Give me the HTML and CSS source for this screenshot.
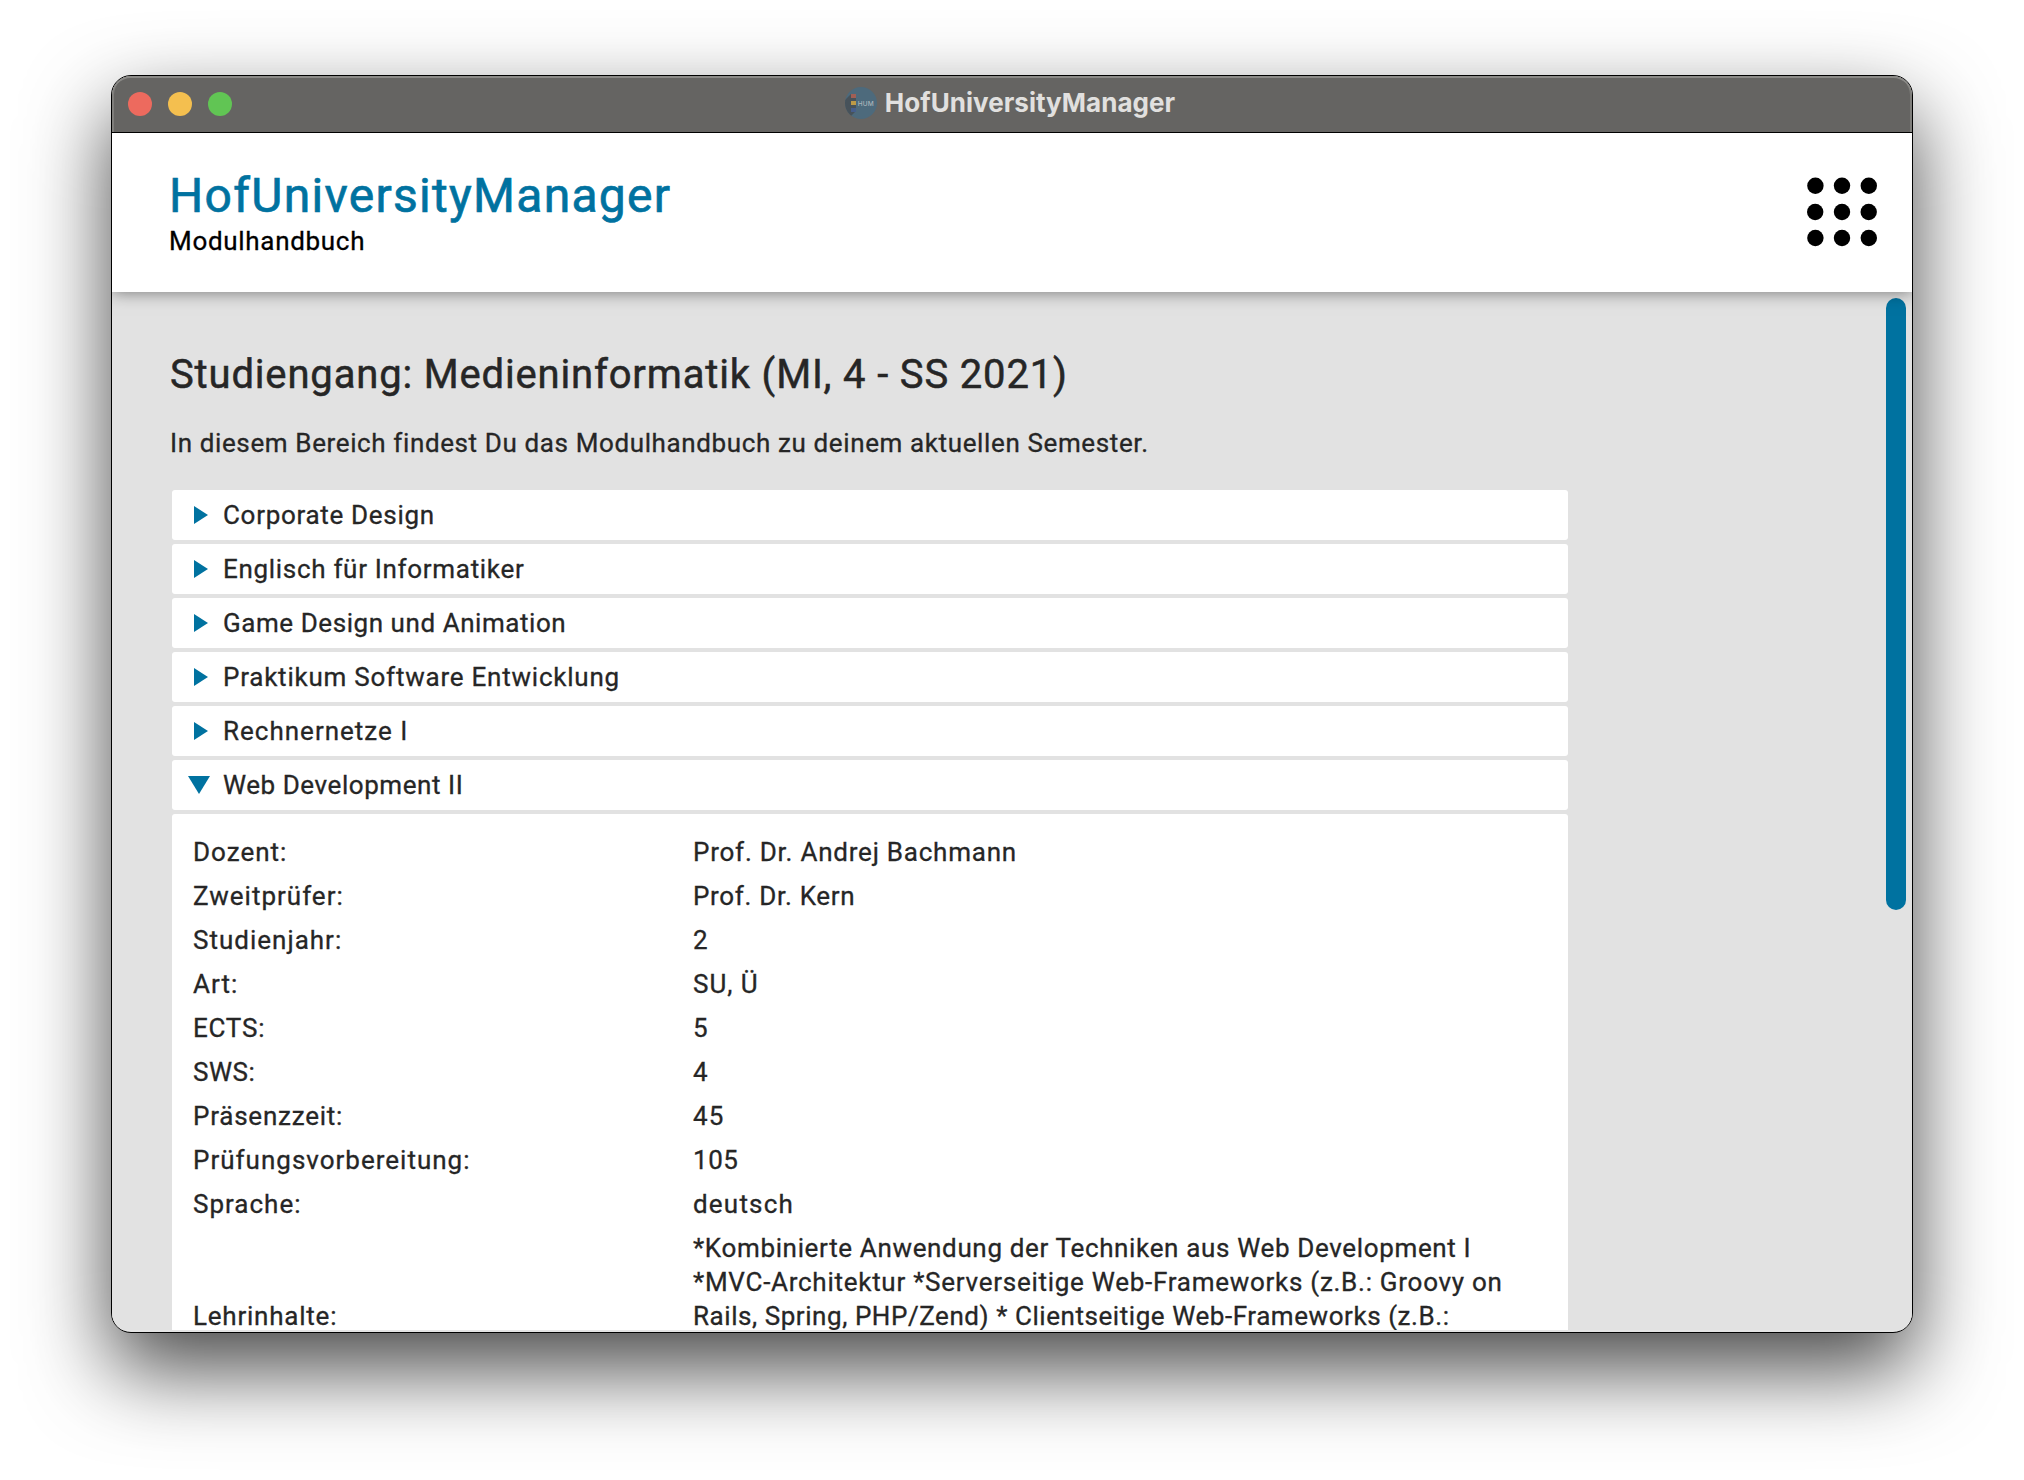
FILE: index.html
```html
<!DOCTYPE html>
<html lang="de">
<head>
<meta charset="utf-8">
<title>HofUniversityManager</title>
<link rel="stylesheet" href="styles.css">
</head>
<body>
<div class="window">
  <div class="titlebar">
    <div class="lights"><span class="light red"></span><span class="light yellow"></span><span class="light green"></span></div>
    <div class="caption">
      <svg class="app-icon" viewBox="0 0 32 32" width="32" height="32">
        <defs><clipPath id="disc"><circle cx="16" cy="16" r="16"/></clipPath></defs>
        <circle cx="16" cy="16" r="16" fill="#4d6a7c"/>
        <g clip-path="url(#disc)">
          <path d="M6 7L0 13V27L6 29L11 24V7Z" fill="#47525a"/>
          <rect x="6" y="7" width="5" height="4" fill="#a05f55"/>
          <rect x="6" y="14" width="5" height="4" fill="#bd9a47"/>
          <rect x="6" y="21" width="5" height="4" fill="#465e8c"/>
        </g>
        <text x="12.8" y="18.6" class="icon-text">HUM</text>
      </svg>
      <span class="caption-text">HofUniversityManager</span>
    </div>
  </div>
  <header class="header">
    <div class="brand">
      <h1>HofUniversityManager</h1>
      <p>Modulhandbuch</p>
    </div>
    <svg class="menu" viewBox="0 0 70 70" width="70" height="70">
      <circle cx="8.4" cy="8.7" r="8.2"/><circle cx="35" cy="8.7" r="8.2"/><circle cx="61.8" cy="8.7" r="8.2"/>
      <circle cx="8.2" cy="35" r="8.2"/><circle cx="35" cy="35" r="8.2"/><circle cx="61.7" cy="35" r="8.2"/>
      <circle cx="8.4" cy="61" r="8.2"/><circle cx="35" cy="61" r="8.2"/><circle cx="61.8" cy="61" r="8.2"/>
    </svg>
  </header>
  <main class="main">
    <div class="content">
      <h2>Studiengang: Medieninformatik (MI, 4 - SS 2021)</h2>
      <p class="intro">In diesem Bereich findest Du das Modulhandbuch zu deinem aktuellen Semester.</p>
      <div class="modules">
        <div class="module"><i class="arrow"></i><span>Corporate Design</span></div>
        <div class="module"><i class="arrow"></i><span>Englisch für Informatiker</span></div>
        <div class="module"><i class="arrow"></i><span class="tight">Game Design und Animation</span></div>
        <div class="module"><i class="arrow"></i><span class="wide">Praktikum Software Entwicklung</span></div>
        <div class="module"><i class="arrow"></i><span class="wider">Rechnernetze I</span></div>
        <div class="module"><i class="arrow open"></i><span class="tight">Web Development II</span></div>
        <dl class="details">
          <dt class="wider">Dozent:</dt><dd class="wide">Prof. Dr. Andrej Bachmann</dd>
          <dt class="wider">Zweitprüfer:</dt><dd>Prof. Dr. Kern</dd>
          <dt class="wider">Studienjahr:</dt><dd>2</dd>
          <dt class="wider">Art:</dt><dd class="wider">SU, Ü</dd>
          <dt class="wide">ECTS:</dt><dd>5</dd>
          <dt class="tight">SWS:</dt><dd>4</dd>
          <dt class="wide">Präsenzzeit:</dt><dd class="widest">45</dd>
          <dt class="wider">Prüfungsvorbereitung:</dt><dd class="tight">105</dd>
          <dt class="wider">Sprache:</dt><dd class="widest">deutsch</dd>
          <dt class="wide">Lehrinhalte:</dt><dd class="topics"><span class="line-1">*Kombinierte Anwendung der Techniken aus Web Development I</span><br>*MVC-Architektur *Serverseitige Web-Frameworks (z.B.: Groovy on<br><span class="tight">Rails, Spring, PHP/Zend) * Clientseitige Web-Frameworks (z.B.:</span></dd>
        </dl>
      </div>
    </div>
    <div class="scroll-thumb"></div>
  </main>
</div>
</body>
</html>
```
FILE: styles.css
```css
* { box-sizing: border-box; margin: 0; padding: 0; }
html, body { height: 100%; }
body {
  background: #fff;
  overflow: hidden;
  padding: 75px 111px 147px;
  font: 400 26px/34px Roboto, "Liberation Sans", sans-serif;
  letter-spacing: .69px;
  color: #262626;
}
.window {
  width: 1802px;
  height: 1258px;
  border: 1px solid #000;
  border-radius: 20px;
  background: #e5e5e5;
  overflow: hidden;
  display: flex;
  flex-direction: column;
  box-shadow: 0 36px 84px rgba(0, 0, 0, .72);
}
.titlebar {
  position: relative;
  z-index: 2;
  flex: none;
  height: 57px;
  background: #656462;
  border-bottom: 1px solid #000;
  border-radius: 19px 19px 0 0;
  box-shadow: inset 0 2px 0 #8b8a87, inset 2px 0 0 #7f7e7b, inset -2px 0 0 #7f7e7b;
  display: grid;
  grid-template-columns: 1fr auto 1fr;
  align-items: center;
}
.lights { display: flex; gap: 16px; padding-left: 16px; }
.light { width: 24px; height: 24px; border-radius: 50%; }
.red { background: #ed6a5e; }
.yellow { background: #f4bf4f; }
.green { background: #61c554; }
.caption {
  display: flex;
  align-items: center;
  gap: 8px;
  padding: 0 4px 3px 0;
  font: 700 26px/34px Inter, sans-serif;
  letter-spacing: .03px;
  color: #e1e0df;
}
.icon-text { font: 500 6.5px Inter, sans-serif; letter-spacing: .2px; fill: #a9b3b9; }
.header, .main { -webkit-text-stroke: .3px currentColor; }
.header {
  position: relative;
  flex: none;
  height: 159px;
  padding: 33px 35px 0 57px;
  background: #fff;
  box-shadow: 0 0 16px rgba(0, 0, 0, .5);
  display: flex;
  justify-content: space-between;
}
h1 {
  font-size: 48px;
  line-height: 59px;
  font-weight: 400;
  letter-spacing: 1.3px;
  color: #0072a0;
  -webkit-text-stroke-width: .7px;
}
.brand p { line-height: 32px; color: #000; }
.menu { margin-top: 11px; fill: #000; }
.main {
  flex: none;
  height: 1038px;
  overflow: hidden;
  background: #e2e2e2;
  display: flex;
  justify-content: space-between;
}
.content { width: 1456px; padding: 59px 0 0 58px; }
h2 {
  font-size: 40px;
  line-height: 48px;
  font-weight: 400;
  letter-spacing: .837px;
  white-space: nowrap;
  -webkit-text-stroke-width: .5px;
}
.intro { margin-top: 27px; letter-spacing: .62px; }
.modules {
  margin: 30px 0 0 2px;
  display: flex;
  flex-direction: column;
  gap: 4px;
}
.module {
  height: 50px;
  padding-left: 16px;
  border-radius: 3px;
  background: #fff;
  display: flex;
  align-items: center;
}
.arrow {
  width: 22px;
  height: 18px;
  margin-right: 13px;
  background: #0072a0;
  clip-path: polygon(6px 0, 20px 50%, 6px 100%);
}
.arrow.open { clip-path: polygon(0 0, 100% 0, 50% 100%); }
.details {
  min-height: 600px;
  padding: 16px 0 0 21px;
  border-radius: 3px;
  background: #fff;
  display: grid;
  grid-template-columns: 500px 1fr;
  align-content: start;
  white-space: nowrap;
}
.details dt, .details dd { padding: 5px 0; align-self: end; }
.details .topics { letter-spacing: .73px; }
.line-1 { letter-spacing: .65px; }
.tight { letter-spacing: .56px; }
.wide { letter-spacing: .77px; }
.wider { letter-spacing: 1px; }
.widest { letter-spacing: 1.2px; }
.scroll-thumb {
  width: 20px;
  height: 612px;
  margin: 6px 6px 0 0;
  border-radius: 10px;
  background: #0072a0;
}
```
